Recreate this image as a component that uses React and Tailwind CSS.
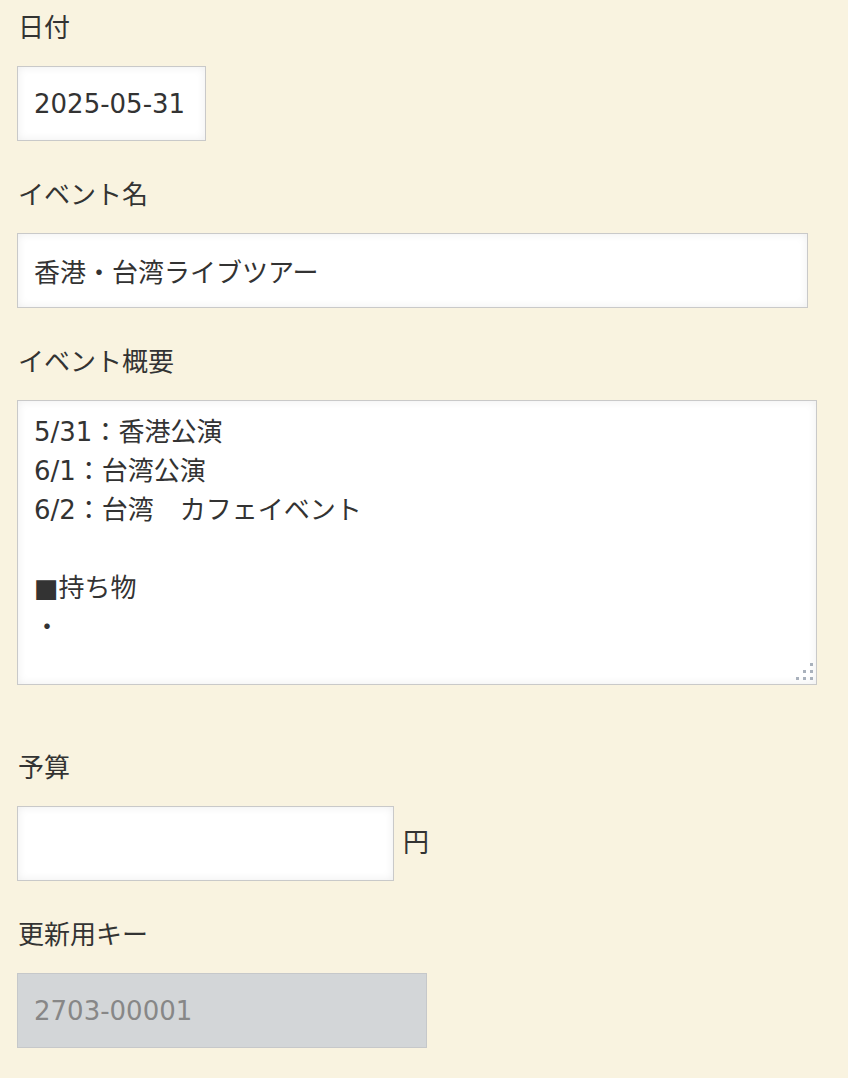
import React from 'react';

const FONT = "font-['DejaVu_Sans','Noto_Sans_CJK_JP',sans-serif]";

const inputBase =
  'block h-[75px] border border-[#c9c9c9] bg-white px-4 text-[26px] text-[#333] outline-none shadow-[inset_0_0_10px_rgba(0,0,0,0.07)]';

function Label({ children }) {
  return <div className="mb-[18px] pl-[1px] leading-[40px]">{children}</div>;
}

// grip drawn over the textarea corner
function Grip() {
  const dots = [
    [14, 0],
    [7, 7], [14, 7],
    [0, 14], [7, 14], [14, 14],
  ];
  return (
    <svg className="pointer-events-none absolute bottom-[5px] right-[4px]" width="17" height="17" viewBox="0 0 17 17">
      {dots.map(([x, y]) => (
        <rect key={`${x}-${y}`} x={x} y={y} width="3" height="3" fill="#a9b1bc" />
      ))}
    </svg>
  );
}

export default function App() {
  const summary = '5/31：香港公演\n6/1：台湾公演\n6/2：台湾　カフェイベント\n\n■持ち物\n・';

  return (
    <div className={`min-h-screen bg-[#f9f3e0] px-[17px] pt-[8px] text-[26px] text-[#333] ${FONT}`}>
      <div className="mb-[34px]">
        <Label>日付</Label>
        <input readOnly value="2025-05-31" className={`${inputBase} w-[189px]`} />
      </div>

      <div className="mb-[34px]">
        <Label>イベント名</Label>
        <input readOnly value="香港・台湾ライブツアー" className={`${inputBase} w-[791px]`} />
      </div>

      <div className="mb-[63px]">
        <Label>イベント概要</Label>
        <div className="relative w-[800px]">
          <textarea
            readOnly
            value={summary}
            className="block h-[285px] w-full resize-none overflow-hidden border border-[#c9c9c9] bg-white px-4 pt-[12px] text-[26px] leading-[39px] text-[#333] outline-none shadow-[inset_0_0_10px_rgba(0,0,0,0.07)]"
          />
          <Grip />
        </div>
      </div>

      <div className="mb-[34px]">
        <Label>予算</Label>
        <div className="flex items-center gap-[9px]">
          <input readOnly value="" className={`${inputBase} w-[377px]`} />
          <span>円</span>
        </div>
      </div>

      <div>
        <Label>更新用キー</Label>
        <input
          disabled
          value="2703-00001"
          className="block h-[75px] w-[410px] border border-[#c6c8ca] bg-[#d3d6d8] px-4 text-[26px] text-[#878787] outline-none"
        />
      </div>
    </div>
  );
}
